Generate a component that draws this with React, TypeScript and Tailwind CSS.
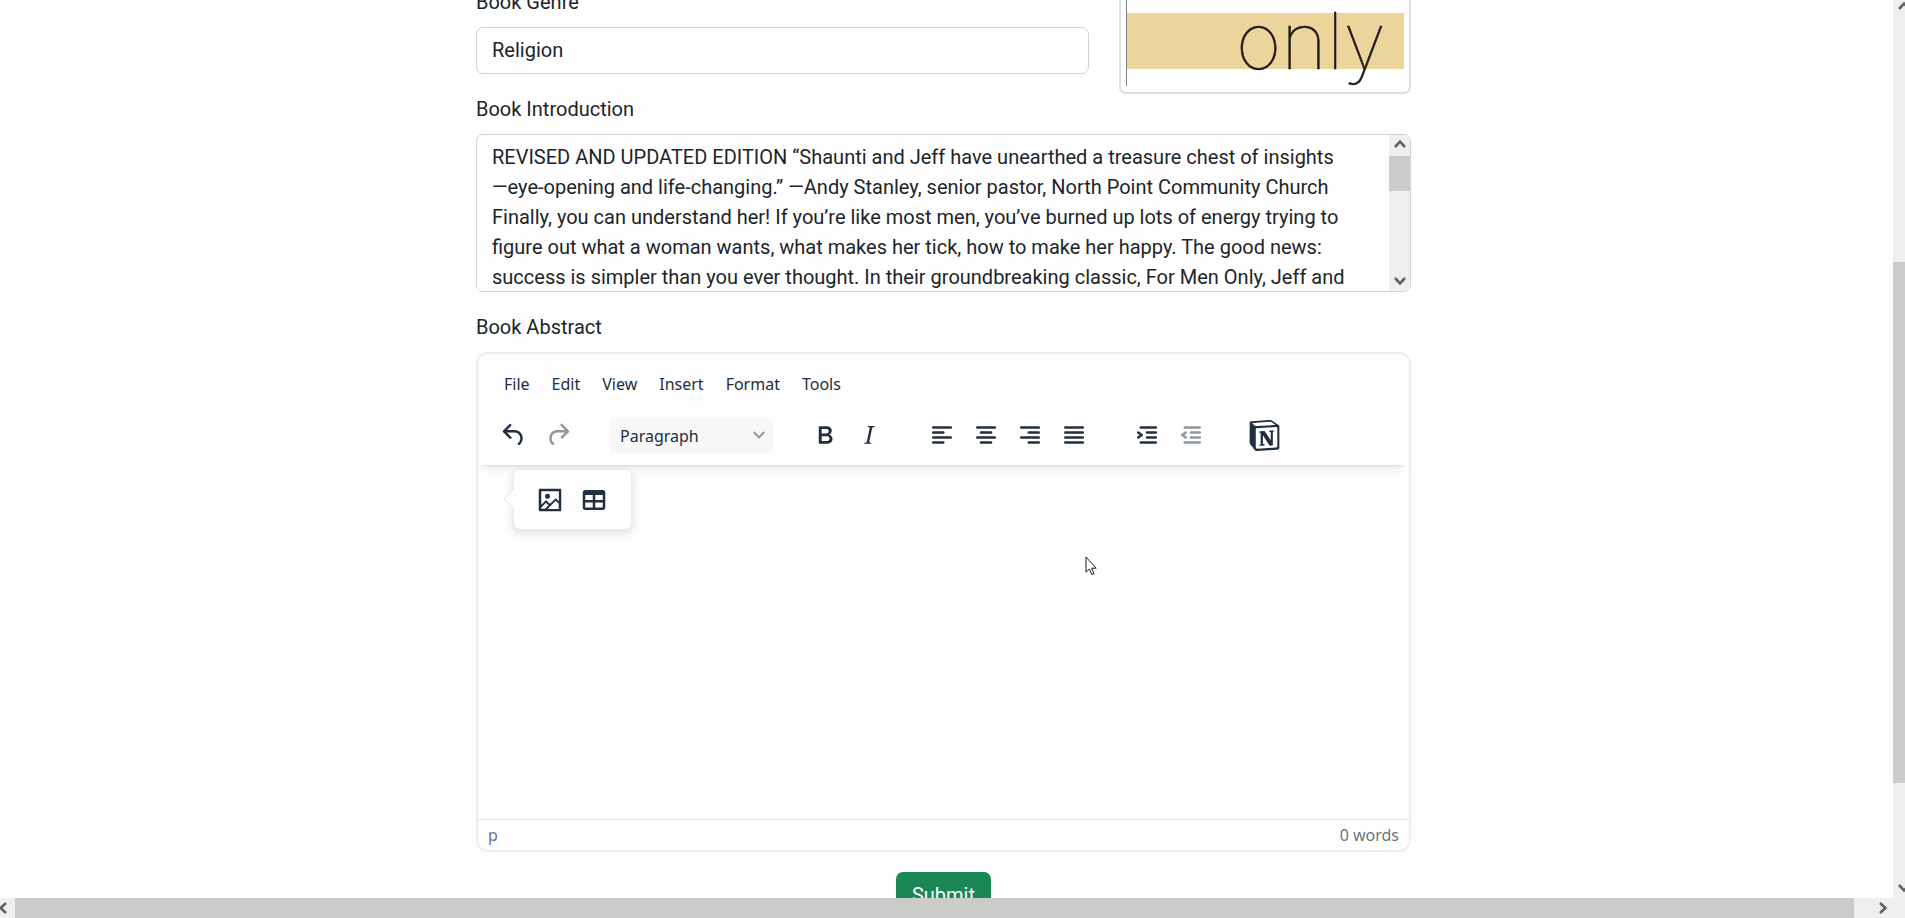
import { useState, type ReactNode } from "react";
import { SiNotion } from "react-icons/si";

const intro =
  "REVISED AND UPDATED EDITION “Shaunti and Jeff have unearthed a treasure chest of insights\n—eye-opening and life-changing.” —Andy Stanley, senior pastor, North Point Community Church Finally, you can understand her! If you’re like most men, you’ve burned up lots of energy trying to figure out what a woman wants, what makes her tick, how to make her happy. The good news: success is simpler than you ever thought. In their groundbreaking classic, For Men Only, Jeff and";

const menus = ["File", "Edit", "View", "Insert", "Format", "Tools"];

function Icon({ children }: { children: ReactNode }) {
  return (
    <svg viewBox="0 0 24 24" className="size-[30px] fill-current" aria-hidden="true">
      {children}
    </svg>
  );
}

function Bars({ bars }: { bars: [number, number][] }) {
  return (
    <Icon>
      {bars.map(([x, w], i) => (
        <rect key={i} x={x} y={5 + i * 4} width={w} height="2" rx="1" />
      ))}
    </Icon>
  );
}

function ToolButton({ label, disabled, children }: { label: string; disabled?: boolean; children: ReactNode }) {
  return (
    <button
      type="button"
      aria-label={label}
      disabled={disabled}
      className="flex h-[35px] w-11 items-center justify-center rounded text-[#222f3e] disabled:text-[#222f3e]/50"
    >
      {children}
    </button>
  );
}

function Chevron({ className }: { className: string }) {
  return (
    <svg viewBox="0 0 12 12" className={className} fill="none" stroke="#606262" strokeWidth="2.6" aria-hidden="true">
      <path d="M1 9 L6 3.6 L11 9" />
    </svg>
  );
}

function Cover() {
  return (
    <div className="flex h-full items-end overflow-hidden rounded-[7px] border-2 border-[#dcdfe3] bg-white px-[5px] pb-[6px]">
      <svg viewBox="0 0 278 96" className="w-full shrink-0" role="img" aria-label="Book cover">
        <rect x="0" y="23" width="278" height="56" fill="#ecd59b" />
        <rect x="0" y="0" width="1" height="96" fill="#7b7f88" />
        <text
          x="110"
          y="79"
          fontFamily="Inter, sans-serif"
          fontWeight="100"
          fontSize="78"
          fill="#1f191a"
          stroke="#1f191a"
          strokeWidth="0.5"
        >
          only
        </text>
      </svg>
    </div>
  );
}

function Editor() {
  return (
    <section
      aria-label="Book Abstract"
      className="flex h-[500px] flex-col overflow-hidden rounded-[12px] border-2 border-[#eeeeee] font-['Noto_Sans',sans-serif] text-[#222f3e]"
    >
      <header className="mx-[2px] shadow-[0_3px_3px_-2px_rgba(34,47,62,0.12),0_10px_10px_-5px_rgba(34,47,62,0.08)]">
        <nav className="flex h-[51px] items-center gap-[22px] pt-2 pl-6 text-[16px]">
          {menus.map((m) => (
            <button key={m} type="button">
              {m}
            </button>
          ))}
        </nav>
        <div className="flex h-[60px] items-center gap-[29px] pl-3">
          <div className="flex">
            <ToolButton label="Undo">
              <Icon>
                <path d="M6.4 8H12c3.7 0 6.2 2 6.8 5.1.6 2.7-.4 5.6-2.3 6.8a1 1 0 0 1-1-1.8c1.1-.6 1.8-2.7 1.4-4.6-.5-2.1-2.1-3.5-4.9-3.5H6.4l3.3 3.3a1 1 0 1 1-1.4 1.4l-5-5a1 1 0 0 1 0-1.4l5-5a1 1 0 0 1 1.4 1.4L6.4 8Z" />
              </Icon>
            </ToolButton>
            <ToolButton label="Redo" disabled>
              <Icon>
                <path d="M17.6 10H12c-2.8 0-4.4 1.4-4.9 3.5-.4 2 .3 4 1.4 4.6a1 1 0 1 1-1 1.8c-2-1.2-2.9-4.1-2.3-6.8.6-3 3-5.1 6.8-5.1h5.6l-3.3-3.3a1 1 0 1 1 1.4-1.4l5 5a1 1 0 0 1 0 1.4l-5 5a1 1 0 0 1-1.4-1.4l3.3-3.3Z" />
              </Icon>
            </ToolButton>
          </div>
          <div className="relative mx-px w-[163px]">
            <select
              aria-label="Block format"
              className="h-[35px] w-full appearance-none rounded bg-[#f7f7f7] pt-[2px] pl-[10px] text-[16px] outline-none"
            >
              <option>Paragraph</option>
            </select>
            <svg viewBox="0 0 12 8" className="pointer-events-none absolute top-[13px] right-2 h-2 w-3" fill="none" stroke="#8f989d" strokeWidth="2">
              <path d="M.7 1 L6 6.4 L11.3 1" />
            </svg>
          </div>
          <div className="flex">
            <ToolButton label="Bold">
              <Icon>
                <path d="M7.8 19c-.3 0-.5 0-.6-.2l-.2-.5V5.7c0-.2 0-.4.2-.5l.6-.2h5c1.5 0 2.7.3 3.5 1 .7.6 1.1 1.4 1.1 2.5a3 3 0 0 1-.6 1.9c-.4.6-1 1-1.6 1.2.4.1.9.3 1.3.6s.8.7 1 1.2c.4.4.5 1 .5 1.6 0 1.3-.4 2.3-1.3 3-.8.7-2.1 1-3.8 1H7.8Zm5-8.3c.6 0 1.2-.1 1.6-.5.4-.3.6-.7.6-1.3 0-1.1-.8-1.7-2.3-1.7H9.3v3.5h3.4Zm.5 6c.7 0 1.3-.1 1.7-.4.4-.4.6-.9.6-1.5s-.2-1-.7-1.4c-.4-.3-1-.4-2-.4H9.4v3.8h4Z" fillRule="evenodd" />
              </Icon>
            </ToolButton>
            <ToolButton label="Italic">
              <Icon>
                <path d="m16.7 4.7-.1.9h-.3c-.6 0-1 0-1.4.3-.3.3-.4.6-.5 1.1l-2.1 9.8v.6c0 .5.4.8 1.4.8h.2l-.2.8H8l.2-.8h.2c1.1 0 1.8-.5 2-1.5l2-9.8.1-.5c0-.6-.4-.8-1.4-.8h-.3l.2-.9h5.8Z" />
              </Icon>
            </ToolButton>
          </div>
          <div className="flex">
            <ToolButton label="Align left">
              <Bars bars={[[4, 16], [4, 10], [4, 16], [4, 10]]} />
            </ToolButton>
            <ToolButton label="Align center">
              <Bars bars={[[4, 16], [7, 10], [4, 16], [7, 10]]} />
            </ToolButton>
            <ToolButton label="Align right">
              <Bars bars={[[4, 16], [10, 10], [4, 16], [10, 10]]} />
            </ToolButton>
            <ToolButton label="Justify">
              <Bars bars={[[4, 16], [4, 16], [4, 16], [4, 16]]} />
            </ToolButton>
          </div>
          <div className="flex">
            <ToolButton label="Increase indent">
              <Icon>
                <rect x="6" y="5" width="14" height="2" rx="1" />
                <rect x="11" y="9" width="9" height="2" rx="1" />
                <rect x="11" y="13" width="9" height="2" rx="1" />
                <rect x="6" y="17" width="14" height="2" rx="1" />
                <path d="M5 10 L7.8 12 L5 14" fill="none" stroke="currentColor" strokeWidth="2" strokeLinecap="round" strokeLinejoin="round" />
              </Icon>
            </ToolButton>
            <ToolButton label="Decrease indent" disabled>
              <Icon>
                <rect x="6" y="5" width="14" height="2" rx="1" />
                <rect x="11" y="9" width="9" height="2" rx="1" />
                <rect x="11" y="13" width="9" height="2" rx="1" />
                <rect x="6" y="17" width="14" height="2" rx="1" />
                <path d="M7.8 10 L5 12 L7.8 14" fill="none" stroke="currentColor" strokeWidth="2" strokeLinecap="round" strokeLinejoin="round" />
              </Icon>
            </ToolButton>
          </div>
          <ToolButton label="Import from Notion">
            <SiNotion className="size-[31px]" />
          </ToolButton>
        </div>
      </header>

      <div className="relative flex-1">
        <div role="textbox" aria-label="Abstract text" contentEditable className="h-full outline-none" />
        <div className="absolute top-1 left-[35px] flex h-[61px] w-[119px] items-center justify-center rounded-[7px] border border-[#e8eaec] bg-[#fefefe] pr-[2px] shadow-[0_3px_10px_rgba(34,47,62,0.16)]">
          <svg viewBox="0 0 11 22" className="absolute top-[18px] -left-[11px] h-[22px] w-3" aria-hidden="true">
            <path d="M11 0 L1 11 L11 22" fill="#fefefe" stroke="#e2e5e7" />
          </svg>
          <ToolButton label="Insert image">
            <Icon>
              <path d="m5 15.7 3.3-3.2c.3-.3.7-.3 1 0L12 15l4.1-4c.3-.4.8-.4 1 0l2 1.9V5H5v10.7ZM5 18V19h3l2.8-2.9-2-2L5 17.9Zm14-3-2.5-2.4-6.4 6.5H19v-4ZM4 3h16c.6 0 1 .4 1 1v16c0 .6-.4 1-1 1H4a1 1 0 0 1-1-1V4c0-.6.4-1 1-1Zm6 8a2 2 0 1 0 0-4 2 2 0 0 0 0 4Z" />
            </Icon>
          </ToolButton>
          <ToolButton label="Insert table">
            <Icon>
              <path d="M19 4a2 2 0 0 1 2 2v12a2 2 0 0 1-2 2H5a2 2 0 0 1-2-2V6c0-1.1.9-2 2-2h14ZM5 14v4h6v-4H5Zm14 0h-6v4h6v-4Zm0-6h-6v4h6V8ZM5 12h6V8H5v4Z" />
            </Icon>
          </ToolButton>
        </div>
        <svg viewBox="0 0 12 20" className="absolute top-[91px] left-[607px] h-5 w-3" aria-hidden="true">
          <path d="M1 1 V16.2 L4.4 13 L6.8 18.6 L9 17.6 L6.7 12.2 H11.2 Z" fill="#fff" stroke="#1b1b2b" />
        </svg>
      </div>

      <footer className="flex h-[31px] items-center justify-between border-t border-[#e3e3e3] px-[10px] text-[16px] text-[#222f3e]/70">
        <span>p</span>
        <span>0 words</span>
      </footer>
    </section>
  );
}

export default function App() {
  const [genre, setGenre] = useState("Religion");
  const [text, setText] = useState(intro);

  return (
    <div className="flex h-screen flex-col overflow-hidden bg-[#fefefe] font-[Roboto,sans-serif] text-[20px] leading-[30px] text-[#212529]">
      <div className="flex min-h-0 flex-1">
        <main className="min-w-0 flex-1 overflow-hidden pr-[6px]">
          <form className="mx-auto -mt-[13px] max-w-[935px]">
            <div className="grid grid-cols-[1fr_292px] gap-[30px]">
              <div className="flex flex-col gap-[10px] pb-5">
                <label htmlFor="genre">Book Genre</label>
                <input
                  id="genre"
                  value={genre}
                  onChange={(e) => setGenre(e.target.value)}
                  className="h-[47px] w-full rounded-[7px] border border-[#ced4da] px-[15px] pb-[2px] outline-none"
                />
              </div>
              <Cover />
            </div>

            <div className="flex flex-col gap-[10px] pb-5">
              <label htmlFor="intro">Book Introduction</label>
              <div className="flex h-[158px] overflow-hidden rounded-[7px] border border-[#ced4da]">
                <textarea
                  id="intro"
                  value={text}
                  onChange={(e) => setText(e.target.value)}
                  className="flex-1 resize-none overflow-hidden px-[15px] pt-[7px] outline-none"
                />
                <div className="flex w-[21px] flex-col items-center bg-[#eef0f0]" aria-hidden="true">
                  <div className="flex h-[21px] items-start pt-[3px]">
                    <Chevron className="size-3" />
                  </div>
                  <div className="h-[35px] w-full bg-[#cbcbca]" />
                  <div className="mt-auto flex h-[21px] items-center">
                    <Chevron className="size-3 rotate-180" />
                  </div>
                </div>
              </div>
            </div>

            <div className="flex flex-col gap-[10px] pb-5">
              <span>Book Abstract</span>
              <Editor />
            </div>

            <div className="flex justify-center">
              <button type="submit" className="h-[47px] w-[95px] rounded-[7px] bg-[#1b8755] pb-[2px] text-white">
                Submit
              </button>
            </div>
          </form>
        </main>
        <div className="flex w-3 flex-col overflow-hidden bg-[#eef0f0]" aria-hidden="true">
          <Chevron className="ml-[5px] size-3 shrink-0" />
          <div className="mt-[250px] h-[521px] w-full shrink-0 bg-[#cbcbca]" />
          <Chevron className="mt-auto mb-1 ml-[5px] size-3 shrink-0 rotate-180" />
        </div>
      </div>
      <div className="flex h-5 items-center bg-[#eef0f0]" aria-hidden="true">
        <div className="w-[15px]">
          <Chevron className="-ml-[3px] size-3 -rotate-90" />
        </div>
        <div className="h-full flex-1 bg-[#cbcbca]" />
        <div className="flex w-[51px] justify-end pr-4">
          <Chevron className="size-3 rotate-90" />
        </div>
      </div>
    </div>
  );
}
